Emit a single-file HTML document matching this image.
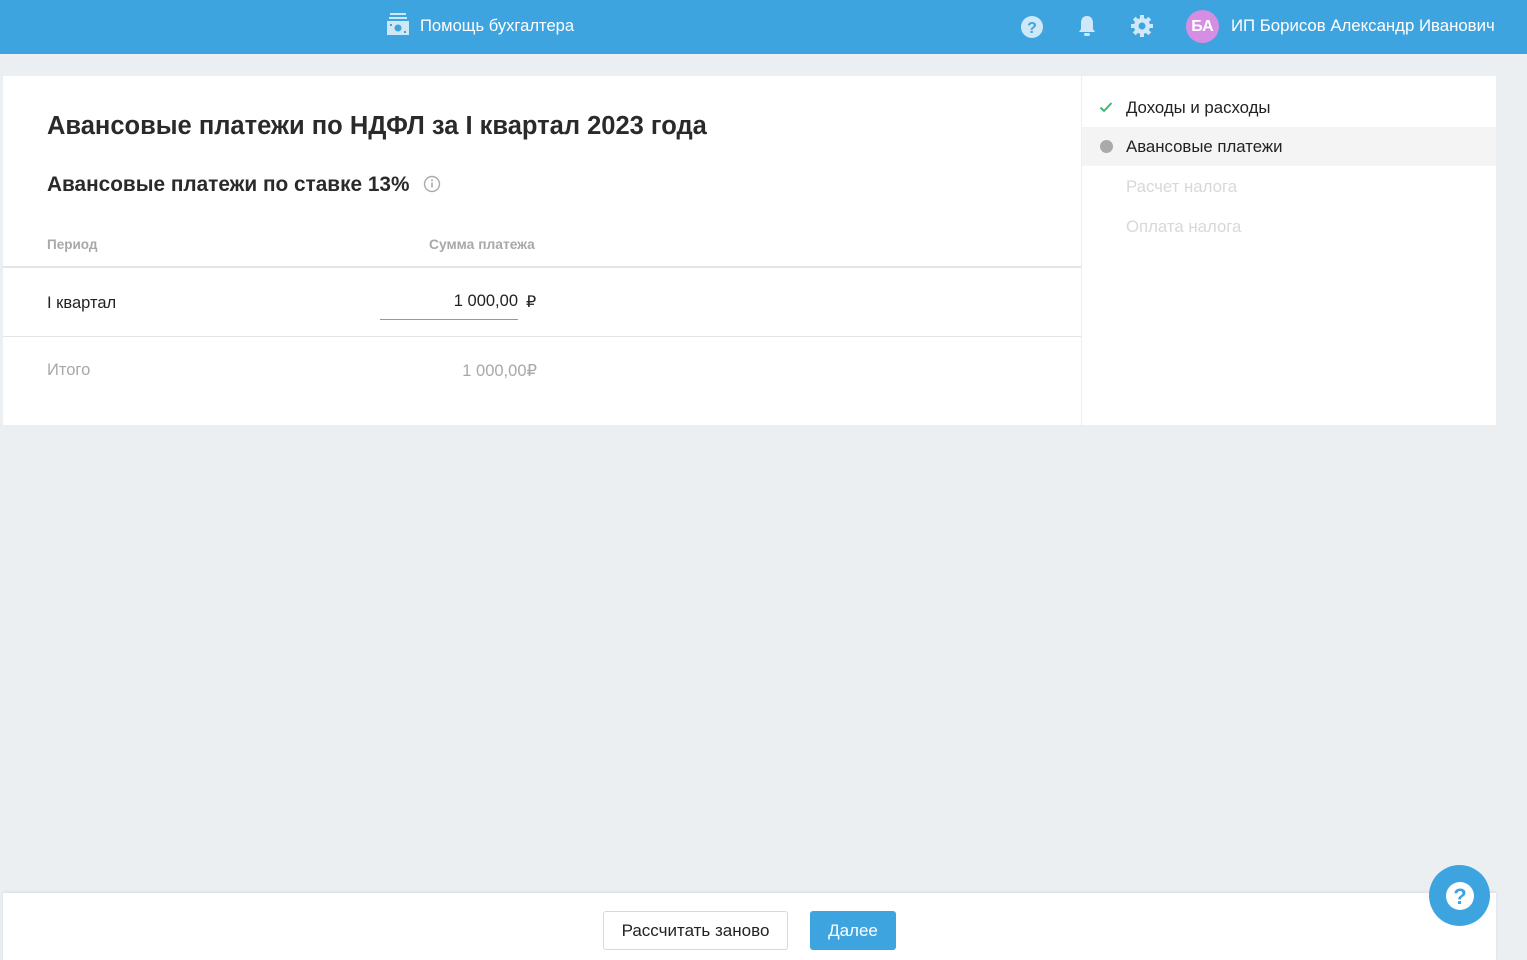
<!DOCTYPE html>
<html><head><meta charset="utf-8"><style>
*{margin:0;padding:0;box-sizing:border-box}
body{width:1527px;height:960px;background:#ebeff2;font-family:"Liberation Sans",sans-serif;position:relative;overflow:hidden;color:#222}
.top{position:absolute;left:0;top:0;width:1527px;height:54px;background:#3ea4e0;color:#fff}
.abs{position:absolute}
.main{position:absolute;left:3px;top:76px;width:1078px;height:349px;background:#fff}
.side{position:absolute;left:1082px;top:76px;width:414px;height:349px;background:#fff}
.foot{position:absolute;left:3px;top:893px;width:1493px;height:67px;background:#fff;box-shadow:0 -1px 3px rgba(0,0,0,.08)}
</style></head><body>
<div class="top">
  <svg class="abs" style="left:387px;top:13px" width="22" height="22" viewBox="0 0 22 22"><rect x="3" y="0" width="16" height="2" fill="#cfe8f8"/><rect x="2" y="4" width="18" height="2" fill="#cfe8f8"/><rect x="0" y="8" width="22" height="14" fill="#cfe8f8"/><circle cx="11" cy="15" r="3.5" fill="#3ea4e0"/><rect x="3" y="11" width="2" height="2" fill="#3ea4e0"/><rect x="17" y="18" width="2" height="2" fill="#3ea4e0"/></svg>
  <div class="abs" style="left:420px;top:16px;font-size:16.6px">Помощь бухгалтера</div>
  <svg class="abs" style="left:1020px;top:15px" width="24" height="24" viewBox="0 0 24 24"><circle cx="12" cy="12" r="11" fill="#cfe8f8"/><text x="12" y="18" font-size="16" font-weight="bold" text-anchor="middle" fill="#3ea4e0" font-family="Liberation Sans">?</text></svg>
  <svg class="abs" style="left:1076px;top:14px" width="22" height="24" viewBox="0 0 22 24"><path d="M11 2c-4 0-6 3-6 7v6l-2 3h16l-2-3V9c0-4-2-7-6-7z" fill="#cfe8f8"/><rect x="8" y="19" width="6" height="3" rx="1.5" fill="#cfe8f8"/></svg>
  <svg class="abs" style="left:1130px;top:14px" width="24" height="24" viewBox="0 0 24 24"><g fill="#cfe8f8"><circle cx="12" cy="12" r="8"/><g id="t"><rect x="10" y="1" width="4" height="5"/><rect x="10" y="18" width="4" height="5"/></g><use href="#t" transform="rotate(45 12 12)"/><use href="#t" transform="rotate(90 12 12)"/><use href="#t" transform="rotate(135 12 12)"/></g><circle cx="12" cy="12" r="3.5" fill="#3ea4e0"/></svg>
  <div class="abs" style="left:1186px;top:10px;width:33px;height:33px;border-radius:50%;background:#d68ee4;font-weight:bold;font-size:16px;line-height:33px;text-align:center">БА</div>
  <div class="abs" style="left:1231px;top:16px;font-size:16.8px">ИП Борисов Александр Иванович</div>
</div>
<div class="main">
  <div class="abs" style="left:44px;top:36px;font-size:25.5px;font-weight:bold;color:#2a2a2a">Авансовые платежи по НДФЛ за I квартал 2023 года</div>
  <div class="abs" style="left:44px;top:97px;font-size:20.8px;font-weight:bold;color:#2a2a2a">Авансовые платежи по ставке 13%</div>
  <svg class="abs" style="left:420px;top:99px" width="18" height="18" viewBox="0 0 18 18"><circle cx="9" cy="9" r="7.5" fill="none" stroke="#aaa" stroke-width="1.4"/><rect x="8.2" y="7.5" width="1.6" height="5" fill="#aaa"/><circle cx="9" cy="5.3" r="1" fill="#aaa"/></svg>
  <div class="abs" style="left:44px;top:161px;font-size:13.5px;font-weight:bold;color:#a8a8a8">Период</div>
  <div class="abs" style="left:426px;top:161px;font-size:13.8px;font-weight:bold;color:#a8a8a8">Сумма платежа</div>
  <div class="abs" style="left:0;top:190px;width:1078px;height:2px;background:#e4e4e4"></div>
  <div class="abs" style="left:44px;top:218px;font-size:16.5px">I квартал</div>
  <div class="abs" style="left:377px;top:216px;width:138px;text-align:right;font-size:16.5px">1 000,00</div>
  <div class="abs" style="left:523px;top:216px;font-size:16px">₽</div>
  <div class="abs" style="left:377px;top:243px;width:138px;height:1px;background:#999"></div>
  <div class="abs" style="left:0;top:260px;width:1078px;height:1px;background:#e4e4e4"></div>
  <div class="abs" style="left:44px;top:285px;font-size:16.5px;color:#a8a8a8">Итого</div>
  <div class="abs" style="left:400px;top:285px;width:134px;text-align:right;font-size:16.5px;color:#a8a8a8">1 000,00₽</div>
</div>
<div class="side">
  <svg class="abs" style="left:17px;top:25px" width="14" height="12" viewBox="0 0 14 12"><path d="M1.5 6.5l3.5 3.5 7.5-8" fill="none" stroke="#3cb878" stroke-width="2"/></svg>
  <div class="abs" style="left:44px;top:22px;font-size:16.8px">Доходы и расходы</div>
  <div class="abs" style="left:0;top:51px;width:414px;height:39px;background:#f4f4f4"></div>
  <div class="abs" style="left:18px;top:64px;width:13px;height:13px;border-radius:50%;background:#aaa"></div>
  <div class="abs" style="left:44px;top:61px;font-size:16.8px">Авансовые платежи</div>
  <div class="abs" style="left:44px;top:101px;font-size:16.8px;color:#d8d8d8">Расчет налога</div>
  <div class="abs" style="left:44px;top:141px;font-size:16.8px;color:#d8d8d8">Оплата налога</div>
</div>
<div class="foot">
  <div class="abs" style="left:600px;top:18px;width:185px;height:39px;border:1px solid #d8d8d8;border-radius:3px;font-size:17px;line-height:38px;text-align:center">Рассчитать заново</div>
  <div class="abs" style="left:807px;top:18px;width:86px;height:39px;background:#3ea4e0;border-radius:3px;font-size:17px;line-height:40px;text-align:center;color:#fff">Далее</div>
</div>
<div class="abs" style="left:1429px;top:865px;width:61px;height:61px;border-radius:50%;background:#3ea4e0"></div>
<svg class="abs" style="left:1445px;top:881px" width="30" height="30" viewBox="0 0 30 30"><circle cx="15" cy="15" r="14" fill="#fff"/><text x="15" y="23" font-size="22" font-weight="bold" text-anchor="middle" fill="#3ea4e0" font-family="Liberation Sans">?</text></svg>
</body></html>
